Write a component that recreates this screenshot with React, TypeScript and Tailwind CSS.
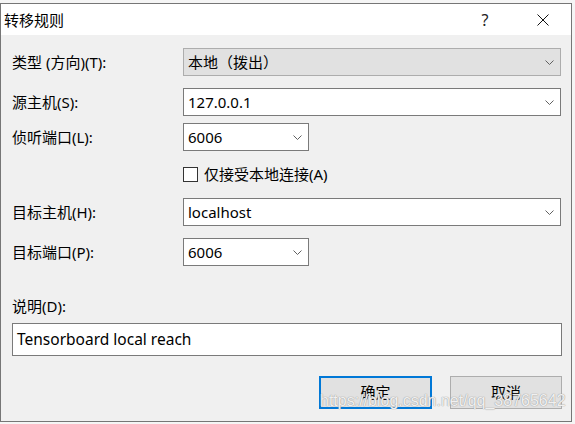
import type React from "react";

const FONT = "font-['Segoe_UI','Noto_Sans','Noto_Sans_CJK_SC',sans-serif]";

/* ── small down chevron used by the combo boxes ─────────────────────────── */
const Chevron = () => (
  <svg width="9" height="5" viewBox="0 0 9 5" className="shrink-0">
    <polyline points="0.5,0.5 4.5,4.5 8.5,0.5" fill="none" stroke="#606060" strokeWidth="1" />
  </svg>
);

const Combo = ({
  value,
  wide = true,
  disabled = false,
}: {
  value: string;
  wide?: boolean;
  disabled?: boolean;
}) => (
  <div
    className={`h-[28px] flex items-center justify-between pl-[4px] pr-[6px] border ${
      wide ? "w-[378px]" : "w-[126px]"
    } ${disabled ? "bg-[#e1e1e1] border-[#adadad]" : "bg-white border-[#7a7a7a]"}`}
  >
    <span className="text-[15px] leading-none text-black">{value}</span>
    <Chevron />
  </div>
);

const Row = ({
  label,
  className = "",
  children,
}: {
  label: string;
  className?: string;
  children: React.ReactNode;
}) => (
  <div className={`flex items-center ${className}`}>
    <div className="w-[171px] text-[15px] text-black leading-none">{label}</div>
    {children}
  </div>
);

export default function App() {
  return (
    <div className={`w-[575px] h-[424px] bg-[#f5f5f5] overflow-hidden relative ${FONT}`}>
      {/* ═════════ DIALOG WINDOW ═════════ */}
      <div className="mt-[3px] w-[572px] h-[419px] border border-[#767676] bg-[#f0f0f0] flex flex-col">
        {/* title bar */}
        <div className="h-[31px] bg-white flex items-center justify-between shrink-0">
          <span className="pl-[3px] pt-[2px] text-[15px] text-black leading-none">转移规则</span>
          <div className="flex items-center h-full mr-[5px]">
            <span className="w-[46px] text-center text-[16px] text-[#222] leading-none pt-[1px]">?</span>
            <div className="ml-[12px] w-[46px] h-full flex items-center justify-center">
              <svg width="12" height="12" viewBox="0 0 12 12">
                <path d="M0.5 0.5 L11.5 11.5 M11.5 0.5 L0.5 11.5" stroke="#111" strokeWidth="1" />
              </svg>
            </div>
          </div>
        </div>

        {/* body */}
        <div className="flex-1 pl-[11px] pr-[9px] pt-[13px] flex flex-col">
          <Row label="类型 (方向)(T):">
            <Combo value="本地（拨出）" disabled />
          </Row>
          <Row label="源主机(S):" className="mt-[12px]">
            <Combo value="127.0.0.1" />
          </Row>
          <Row label="侦听端口(L):" className="mt-[7px]">
            <Combo value="6006" wide={false} />
          </Row>

          <div className="mt-[13px] h-[20px] flex items-center pl-[171px]">
            <div className="w-[15px] h-[15px] border border-[#333] bg-white" />
            <span className="ml-[6px] text-[15px] text-black leading-none">仅接受本地连接(A)</span>
          </div>

          <Row label="目标主机(H):" className="mt-[14px]">
            <Combo value="localhost" />
          </Row>
          <Row label="目标端口(P):" className="mt-[12px]">
            <Combo value="6006" wide={false} />
          </Row>

          <div className="mt-[30px] h-[20px] flex items-center text-[15px] text-black leading-none">
            说明(D):
          </div>
          <div className="mt-[7px] w-full h-[33px] border border-[#7a7a7a] bg-white flex items-center pl-[4px]">
            <span className="text-[15.5px] text-black leading-none">Tensorboard local reach</span>
          </div>

          <div className="mt-[20px] flex justify-end gap-[18px]">
            <button className="w-[113px] h-[33px] border-2 border-[#0078d7] bg-[#e1e1e1] text-[15px] text-black">
              确定
            </button>
            <button className="w-[112px] h-[33px] border border-[#adadad] bg-[#e1e1e1] text-[15px] text-black">
              取消
            </button>
          </div>
        </div>
      </div>

      {/* watermark laid over the buttons */}
      <div className="absolute left-[320px] top-[393px] font-['Liberation_Sans',sans-serif] text-[16px] leading-none text-white/85 [text-shadow:0_0_1px_#9a9a9a,0_0_1px_#9a9a9a]">
        https://blog.csdn.net/qq_38765642
      </div>
    </div>
  );
}
